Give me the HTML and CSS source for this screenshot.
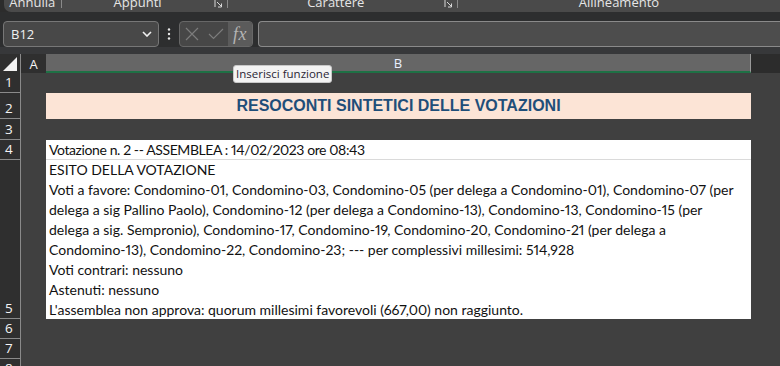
FILE: index.html
```html
<!DOCTYPE html>
<html>
<head>
<meta charset="utf-8">
<title>Resoconti sintetici delle votazioni</title>
<link rel="stylesheet" href="styles.css">
</head>
<body>
<div class="app">

  <div class="ribbon">
    <div class="group g-annulla"><span class="label">Annulla</span></div>
    <div class="group g-appunti">
      <span class="label">Appunti</span>
      <svg class="launcher" width="9" height="9" viewBox="0 0 9 9"><path d="M1 0V7M3 2L7.5 6.5M4 7H7.5V3.5" fill="none" stroke="#d8d8d8" stroke-width="1"/></svg>
    </div>
    <div class="group g-carattere">
      <span class="label">Carattere</span>
      <svg class="launcher" width="9" height="9" viewBox="0 0 9 9"><path d="M1 0V7M3 2L7.5 6.5M4 7H7.5V3.5" fill="none" stroke="#d8d8d8" stroke-width="1"/></svg>
    </div>
    <div class="group g-allineamento"><span class="label">Allineamento</span></div>
  </div>

  <div class="formula-bar">
    <div class="name-box">
      <span>B12</span>
      <svg width="10" height="6" viewBox="0 0 10 6"><path d="M1 1L5 5L9 1" fill="none" stroke="#f0f0f0" stroke-width="1.6"/></svg>
    </div>
    <svg class="more" width="4" height="12" viewBox="0 0 4 12"><circle cx="2" cy="1.5" r="1.2" fill="#e8e8e8"/><circle cx="2" cy="6" r="1.2" fill="#e8e8e8"/><circle cx="2" cy="10.5" r="1.2" fill="#e8e8e8"/></svg>
    <div class="fx-buttons">
      <span class="fx-btn">
        <svg width="14" height="14" viewBox="0 0 14 14"><path d="M1 1L13 13M13 1L1 13" stroke="#7c7c7c" stroke-width="1.2"/></svg>
      </span>
      <span class="fx-btn">
        <svg width="16" height="12" viewBox="0 0 16 12"><path d="M1 6L5.5 10.5L15 1" fill="none" stroke="#7c7c7c" stroke-width="1.2"/></svg>
      </span>
      <span class="fx-btn fx-insert">fx</span>
    </div>
    <div class="formula-input"></div>
  </div>

  <div class="sheet">
    <div class="col-headers">
      <div class="corner">
        <svg width="14" height="14" viewBox="0 0 14 14"><path d="M14 0V14H0Z" fill="#f2f2f2"/></svg>
      </div>
      <div class="ch ch-a">A</div>
      <div class="ch ch-b">B</div>
      <div class="ch ch-rest"></div>
    </div>

    <div class="row r1"><div class="rh">1</div><div class="ca"></div><div class="cb"></div></div>
    <div class="row r2"><div class="rh">2</div><div class="ca"></div><div class="cb title">RESOCONTI SINTETICI DELLE VOTAZIONI</div></div>
    <div class="row r3"><div class="rh">3</div><div class="ca"></div><div class="cb"></div></div>
    <div class="row r4"><div class="rh">4</div><div class="ca"></div><div class="cb cell-text head-line">Votazione n. 2 -- ASSEMBLEA : 14/02/2023 ore 08:43</div></div>
    <div class="row r5">
      <div class="rh">5</div><div class="ca"></div>
      <div class="cb cell-text">
        <div>ESITO DELLA VOTAZIONE</div>
        <div>Voti a favore: Condomino-01, Condomino-03, Condomino-05 (per delega a Condomino-01), Condomino-07 (per</div>
        <div>delega a sig Pallino Paolo), Condomino-12 (per delega a Condomino-13), Condomino-13, Condomino-15 (per</div>
        <div>delega a sig. Sempronio), Condomino-17, Condomino-19, Condomino-20, Condomino-21 (per delega a</div>
        <div>Condomino-13), Condomino-22, Condomino-23; --- per complessivi millesimi: 514,928</div>
        <div>Voti contrari: nessuno</div>
        <div>Astenuti: nessuno</div>
        <div>L'assemblea non approva: quorum millesimi favorevoli (667,00) non raggiunto.</div>
      </div>
    </div>
    <div class="row r6"><div class="rh">6</div><div class="ca"></div><div class="cb"></div></div>
    <div class="row r7"><div class="rh">7</div><div class="ca"></div><div class="cb"></div></div>
    <div class="row r8"><div class="rh">8</div><div class="ca"></div><div class="cb"></div></div>

    <div class="tooltip">Inserisci funzione</div>
  </div>

</div>
</body>
</html>
```

FILE: styles.css
```css
* {box-sizing: border-box;}

body {
	margin: 0;
	background: #2c2c2c;
	font-family: "Open Sans", "Noto Sans", sans-serif;
	color: #f0f0f0;
}

.app {
	width: 780px;
	height: 366px;
	overflow: hidden;
}

/* ribbon, only the bottom strip is visible */
.ribbon {
	display: flex;
	height: 12px;
	margin-left: 4px;
	background: #4a4a4a;
	border-radius: 0 0 0 7px;
	overflow: hidden;
}

.group {
	display: flex;
	align-items: flex-start;
	border-right: 1px solid #8a8a8a;
	height: 8px;
}

.label {
	flex: 1;
	text-align: center;
	font-size: 13px;
	line-height: 13px;
	margin-top: -4px;
	color: #e6e6e6;
}

.launcher {margin: 0 4px 0 0; flex: none;}

.g-annulla {width: 59px;}
.g-appunti {width: 170px;}
.g-carattere {width: 236px;}
.g-allineamento {width: 330px; border-right: none;}

/* formula bar */
.formula-bar {
	display: flex;
	align-items: center;
	height: 42px;
	padding: 9px 0 7px 3px;
	background: linear-gradient(#2d2e2f 0 35px, #37383a 35px);
}

.name-box {
	display: flex;
	align-items: center;
	justify-content: space-between;
	width: 156px;
	height: 26px;
	padding: 0 6px 0 7px;
	background: #484848;
	border: 1px solid #777;
	border-radius: 4px;
	font-size: 13px;
}

.more {margin: 0 8px 0 8px;}

.fx-buttons {
	display: flex;
	align-items: center;
	width: 74px;
	height: 26px;
	background: #474747;
	border: 1px solid #676767;
	border-radius: 4px;
	overflow: hidden;
}

.fx-btn {
	display: flex;
	align-items: center;
	justify-content: center;
	width: 24px;
	height: 100%;
}

.fx-insert {
	background: #5b5b5b;
	font-family: "Liberation Serif", serif;
	font-style: italic;
	font-size: 18px;
	color: #b4b4b4;
	letter-spacing: 0.5px;
}

.formula-input {
	flex: 1;
	height: 26px;
	margin-left: 5px;
	background: #4d4d4d;
	border: 1px solid #8a8a8a;
	border-right: none;
	border-radius: 4px 0 0 4px;
}

/* sheet */
.sheet {
	position: relative;
	background: #404040;
	height: 312px;
}

.col-headers {
	display: flex;
	height: 19px;
}

.corner {
	width: 21px;
	display: flex;
	align-items: flex-end;
	justify-content: flex-end;
	padding: 0 3px 2px 0;
	background: #2f2f2f;
	border-right: 1px solid #8a8a8a;
}

.ch {
	display: flex;
	align-items: center;
	justify-content: center;
	font-size: 13px;
	color: #f4f4f4;
}

.ch-a {width: 25px; background: #2f2f2f;}

.ch-b {
	width: 705px;
	background: #666666;
	border-bottom: 2px solid #1e7145;
	border-right: 1px solid #9a9a9a;
	padding-top: 1px;
	color: #e9f0ff;
}

.ch-rest {flex: 1; background: #2c2c2c;}

.row {display: flex;}
.r1 {height: 20px;}
.r2 {height: 26px;}
.r3 {height: 21px;}
.r4 {height: 20px;}
.r5 {height: 159px;}
.r6, .r7, .r8 {height: 20px;}

.rh {
	width: 21px;
	display: flex;
	align-items: flex-end;
	padding: 0 0 2px 5px;
	background: #2f2f2f;
	border-right: 1px solid #8a8a8a;
	border-bottom: 1px solid #8a8a8a;
	font-size: 13.5px;
	line-height: 16px;
	color: #f4f4f4;
}

.ca {width: 25px;}
.cb {width: 705px;}

.title {
	display: flex;
	align-items: center;
	justify-content: center;
	background: #fce4d6;
	font-family: "Liberation Sans", Arial, sans-serif;
	font-weight: bold;
	font-size: 16px;
	color: #1f4e79;
}

.cell-text {
	background: #ffffff;
	font-family: Lato, "Liberation Sans", sans-serif;
	font-size: 14px;
	font-variant-numeric: proportional-nums;
	line-height: 20px;
	color: #111;
	padding-left: 3px;
	white-space: nowrap;
	overflow: hidden;
}

.head-line {
	border-bottom: 1px solid #dadada;
	letter-spacing: -0.4px;
}

.tooltip {
	position: absolute;
	left: 233px;
	top: 11px;
	height: 18px;
	padding: 0 2px;
	background: #f3f3f3;
	border: 1px solid #c8c8c8;
	border-radius: 3px;
	font-size: 11.5px;
	line-height: 16px;
	color: #2a1f33;
}
```
